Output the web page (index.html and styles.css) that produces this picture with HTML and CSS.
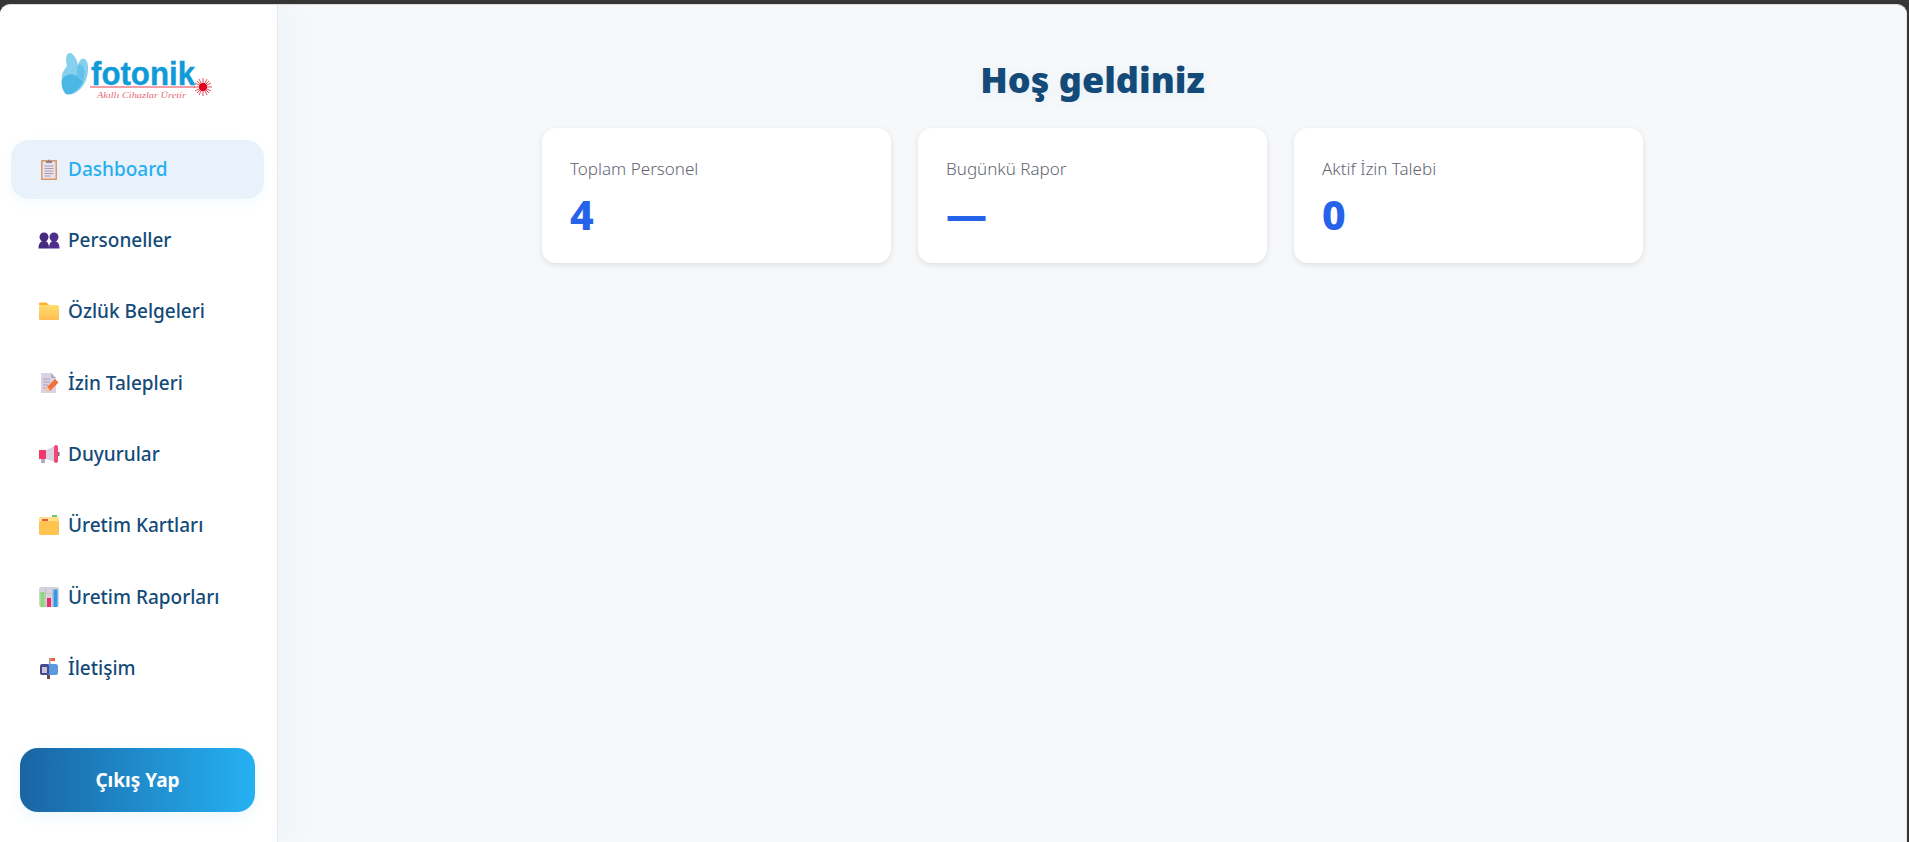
FILE: index.html

```html
<!DOCTYPE html>
<html lang="tr">
<head>
  <title>Fotonik Dashboard</title>
  <meta charset="UTF-8" />
  <meta name="viewport" content="width=device-width, initial-scale=1.0"/>
  <link rel="stylesheet" href="styles.css">
</head>
<body>
  <div class="window">
    <aside class="sidebar">
      <div class="logo">
        <svg width="156" height="52" viewBox="0 0 156 52">
          <path d="M10 3C6 3 5 9 7 16 4 20 1 24 2 29c-1 5 0 12 4 15 8 3 17-6 20-14 3-8 3-18-1-21-3-2-6 2-7 6C17 9 13 3 10 3z" fill="#86d0ee"/>
          <path d="M18 15c5-2 8 4 6 13-1 5-4 9-7 12-1-8-1-17 1-25z" fill="#63c2ea"/>
          <path d="M2 29c4-5 10-6 14-3l7 6c-3 6-11 14-17 12-3-3-5-9-4-15z" fill="#4bb7e3"/>
          <text x="31" y="35" class="logo-name" textLength="104" lengthAdjust="spacingAndGlyphs">fotonik</text>
          <line x1="30" y1="37" x2="135" y2="37" stroke="#e8404c" stroke-width="1"/>
          <text x="37" y="48" class="logo-tag" textLength="89" lengthAdjust="spacingAndGlyphs">Akıllı Cihazlar Üretir</text>
          <g stroke="#e3202e" stroke-width=".8">
            <line x1="134" y1="37" x2="152" y2="37"/>
            <line x1="143" y1="28" x2="143" y2="46"/>
            <line x1="137" y1="31" x2="149" y2="43"/>
            <line x1="149" y1="31" x2="137" y2="43"/>
            <line x1="135" y1="33" x2="151" y2="41"/>
            <line x1="151" y1="33" x2="135" y2="41"/>
            <line x1="139" y1="29" x2="147" y2="45"/>
            <line x1="147" y1="29" x2="139" y2="45"/>
          </g>
          <circle cx="143" cy="37" r="4" fill="#e0001b"/>
        </svg>
      </div>

      <nav class="menu">
        <a class="menu-item active" href="#">
          <svg class="menu-icon" viewBox="0 0 22 22">
            <rect x="3" y="2" width="16" height="20" rx="1" fill="#d9976a"/>
            <rect x="4.500" y="3.500" width="13" height="17" fill="#e9e1ec"/>
            <path d="M6.500 8h9M6.500 10.500h9M6.500 13h9M6.500 15.500h9M6.500 18h6" stroke="#a39cb0" stroke-width="1"/>
            <path d="M8 5V3h2l1-2 1 2h2v2z" fill="#8b8494"/>
          </svg>
          <span>Dashboard</span>
        </a>
        <a class="menu-item" href="#">
          <svg class="menu-icon" viewBox="0 0 22 22">
            <circle cx="6" cy="8" r="4.500" fill="#462a80"/>
            <circle cx="16" cy="8" r="4.500" fill="#4f2e8c"/>
            <path d="M.500 19.500c0-5 2-7.500 5.500-7.500s5 2.500 5 7.500z" fill="#462a80"/>
            <path d="M11 19.500c0-5 1.500-7.500 5-7.500s5.500 2.500 5.500 7.500z" fill="#4f2e8c"/>
          </svg>
          <span>Personeller</span>
        </a>
        <a class="menu-item" href="#">
          <svg class="menu-icon" viewBox="0 0 22 22">
            <defs>
              <linearGradient id="folderFill" x1="0" y1="0" x2="0" y2="1">
                <stop offset="0" stop-color="#ffdc6e"/>
                <stop offset="1" stop-color="#ffbe4f"/>
              </linearGradient>
            </defs>
            <path d="M1 4c0-1 .500-1.500 1.500-1.500h6L11 5H1z" fill="#ffb02e"/>
            <rect x="1" y="5" width="20" height="15" rx="1.500" fill="url(#folderFill)"/>
          </svg>
          <span>Özlük Belgeleri</span>
        </a>
        <a class="menu-item" href="#">
          <svg class="menu-icon" viewBox="0 0 22 22">
            <path d="M3 1h10l5 5v15H3z" fill="#dcd3e2"/>
            <path d="M13 1l5 5h-5z" fill="#b4acbc"/>
            <path d="M5 7h7M5 10h7M5 13h5M5 16h3" stroke="#aaa2b4" stroke-width="1"/>
            <path d="M8 19l1-4 8-8 3.500 3.500-8 8z" fill="#f4703a"/>
            <path d="M8 19l1-4 3 3z" fill="#ffd3a6"/>
          </svg>
          <span>İzin Talepleri</span>
        </a>
        <a class="menu-item" href="#">
          <svg class="menu-icon" viewBox="0 0 22 22">
            <rect x="3" y="15" width="4" height="5" fill="#b4a9c6"/>
            <rect x="1" y="7" width="7" height="9" fill="#f13a6a"/>
            <path d="M8 7l9-4v16l-9-3z" fill="#d9d4e2"/>
            <rect x="16" y="2" width="4" height="18" rx="2" fill="#f0477b"/>
            <rect x="20" y="9" width="1.500" height="4" fill="#6f6a7c"/>
          </svg>
          <span>Duyurular</span>
        </a>
        <a class="menu-item" href="#">
          <svg class="menu-icon" viewBox="0 0 22 22">
            <rect x="14" y="1" width="5" height="3" fill="#6fc56e"/>
            <rect x="8" y="3" width="6" height="2" fill="#3e9be6"/>
            <rect x="1" y="3" width="20" height="7" rx="1.500" fill="#ffe08a"/>
            <rect x="4" y="5" width="6" height="2" fill="#f0554a"/>
            <rect x="1" y="7" width="20" height="14" rx="1.500" fill="#ffc44f"/>
          </svg>
          <span>Üretim Kartları</span>
        </a>
        <a class="menu-item" href="#">
          <svg class="menu-icon" viewBox="0 0 22 22">
            <rect x="1" y="1" width="20" height="20" rx="2" fill="#d5d2dc"/>
            <path d="M7.500 1v20M14.500 1v20M1 7.500h20" stroke="#bdb9c6" stroke-width=".7"/>
            <rect x="2.500" y="6" width="4" height="15" fill="#86dc72"/>
            <rect x="9" y="12" width="4" height="9" fill="#ec2a6c"/>
            <rect x="15.500" y="3.500" width="4" height="17.500" fill="#2f9ae8"/>
          </svg>
          <span>Üretim Raporları</span>
        </a>
        <a class="menu-item" href="#">
          <svg class="menu-icon" viewBox="0 0 22 22">
            <rect x="11" y="1" width="1.500" height="9" fill="#9d97a8"/>
            <rect x="12.500" y="1" width="4.500" height="3" fill="#f4603a"/>
            <rect x="2" y="7" width="18" height="11" rx="2.500" fill="#5a9ae0"/>
            <rect x="2" y="7" width="9" height="11" rx="2.500" fill="#454a8c"/>
            <rect x="4" y="10" width="5" height="6" fill="#c9c4d8"/>
            <rect x="9" y="18" width="3" height="4" fill="#6b4a44"/>
          </svg>
          <span>İletişim</span>
        </a>
      </nav>

      <button class="logout">Çıkış Yap</button>
    </aside>

    <main class="content">
      <h1>Hoş geldiniz</h1>
      <div class="cards">
        <div class="card">
          <div class="card-label">Toplam Personel</div>
          <div class="card-value">4</div>
        </div>
        <div class="card">
          <div class="card-label">Bugünkü Rapor</div>
          <div class="card-value">—</div>
        </div>
        <div class="card">
          <div class="card-label">Aktif İzin Talebi</div>
          <div class="card-value">0</div>
        </div>
      </div>
    </main>
  </div>
</body>
</html>
```

FILE: styles.css

```css
* { box-sizing: border-box; }
html, body { height: 100%; }
body { margin: 0; background: #363636; font-family: "Noto Sans", "Open Sans", sans-serif; overflow: hidden; }

.window { display: flex; height: 838px; margin: 4px 2px 0 0; border-top: 1px solid #dcdcdc; border-radius: 10px 10px 0 0; overflow: hidden; background: #f6f8fa; box-shadow: inset -1px 0 0 #e2e4e8; }

.sidebar { display: flex; flex-direction: column; width: 278px; flex: none; padding: 45px 13px 30px 11px; background: #fff; border-right: 1px solid #e4e9f0; box-shadow: 4px 0 40px rgba(39, 174, 240, 0.06); }
.logo { display: flex; justify-content: center; height: 90px; }
.logo-name { font-family: "Liberation Sans", sans-serif; font-size: 33px; font-weight: 700; fill: #0f9bd8; stroke: #0f9bd8; stroke-width: 0.4px; }
.logo-tag { font-family: "Liberation Serif", serif; font-size: 9px; font-style: italic; fill: #e96a78; }

.menu { display: flex; flex-direction: column; gap: 12.4px; }
.menu-item { display: flex; align-items: center; gap: 8px; height: 59px; padding: 0 0 2px 27px; border-radius: 18px; color: #134a78; font-size: 19px; font-weight: 500; text-decoration: none; }
.menu-item.active { background: #e9f2fb; color: #27aef0; box-shadow: 0 4px 14px rgba(39, 174, 240, 0.05); }
.menu-icon { width: 22px; height: 22px; flex: none; }

.logout { margin: auto 9px 0 9px; height: 64px; border: none; border-radius: 18px; background: linear-gradient(90deg, #1a64a3, #25b1f2); color: #fff; font-family: inherit; font-size: 19px; font-weight: 700; box-shadow: 0 4px 14px rgba(39, 174, 240, 0.1); }

.content { flex: 1; display: flex; flex-direction: column; align-items: center; padding-top: 51px; }
h1 { margin: 0 0 24px 0; color: #134a78; font-size: 36px; font-weight: 900; line-height: 48px; text-shadow: 0 2px 12px rgba(39, 174, 240, 0.08); }

.cards { display: grid; grid-template-columns: repeat(3, 349px); gap: 27px; }
.card { height: 135px; padding: 29px 28px 0 28px; background: #fff; border-radius: 14px; box-shadow: 0 2px 6px rgba(0, 0, 0, 0.1); }
.card-label { color: #5f6673; font-size: 17px; font-weight: 300; line-height: 24px; }
.card-value { margin-top: 8px; color: #2563eb; font-size: 41px; font-weight: 800; line-height: 50px; }
```
